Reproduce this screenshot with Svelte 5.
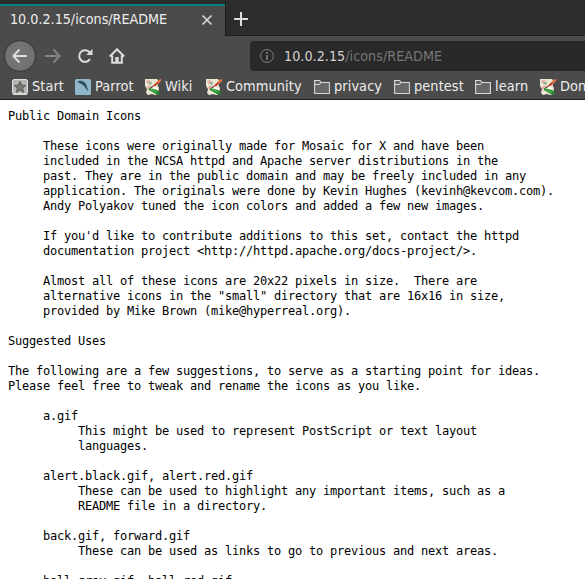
<script>
  const bookmarks = [
    { label: 'Start', icon: 'star', width: 63 },
    { label: 'Parrot', icon: 'parrot', width: 70 },
    { label: 'Wiki', icon: 'wiki', width: 61 },
    { label: 'Community', icon: 'wiki', width: 108 },
    { label: 'privacy', icon: 'folder', width: 80 },
    { label: 'pentest', icon: 'folder', width: 81 },
    { label: 'learn', icon: 'folder', width: 65 },
    { label: 'Donate', icon: 'wiki', width: 80 }
  ];

  const readme = `Public Domain Icons

     These icons were originally made for Mosaic for X and have been
     included in the NCSA httpd and Apache server distributions in the
     past. They are in the public domain and may be freely included in any
     application. The originals were done by Kevin Hughes (kevinh@kevcom.com).
     Andy Polyakov tuned the icon colors and added a few new images.

     If you'd like to contribute additions to this set, contact the httpd
     documentation project <http://httpd.apache.org/docs-project/>.

     Almost all of these icons are 20x22 pixels in size.  There are
     alternative icons in the "small" directory that are 16x16 in size,
     provided by Mike Brown (mike@hyperreal.org).

Suggested Uses

The following are a few suggestions, to serve as a starting point for ideas.
Please feel free to tweak and rename the icons as you like.

     a.gif
          This might be used to represent PostScript or text layout
          languages.

     alert.black.gif, alert.red.gif
          These can be used to highlight any important items, such as a
          README file in a directory.

     back.gif, forward.gif
          These can be used as links to go to previous and next areas.

     ball.gray.gif, ball.red.gif`;
</script>

<div class="browser">
  <header>
    <div class="tabs">
      <div class="tab">
        <span class="title">10.0.2.15/icons/README</span>
        <svg class="close" width="12" height="12" viewBox="0 0 12 12"><path d="M1.5 1.5l9 9M10.5 1.5l-9 9" stroke="#d8d8d8" stroke-width="1.7" /></svg>
      </div>
      <div class="strip">
        <svg width="14" height="14" viewBox="0 0 14 14"><path d="M7 0v14M0 7h14" stroke="#dedede" stroke-width="2" /></svg>
      </div>
    </div>
    <div class="nav">
      <button class="back" aria-label="Back">
        <svg width="16" height="16" viewBox="0 0 16 16"><path d="M15 8H1.5M7.5 1.5L1.3 8l6.2 6.5" /></svg>
      </button>
      <svg class="forward" width="16" height="16" viewBox="0 0 16 16"><path d="M0 8h14.5M8.5 1.5L14.7 8l-6.2 6.5" /></svg>
      <svg class="reload" width="16" height="16" viewBox="0 0 16 16"><path d="M13 11A5.8 5.8 0 1 1 11.8 3.6L13.5 5.2" /><path class="fill" d="M15.5 1v6H9.3z" /></svg>
      <svg class="home" width="16" height="16" viewBox="0 0 16 16"><path d="M.8 8.5L8 1.3l7.2 7.2M3.2 7.5v7.3h9.6V7.5" /><path class="fill" d="M6.3 9h3.4v6H6.3z" /></svg>
      <div class="url">
        <svg width="14" height="14" viewBox="0 0 14 14"><circle cx="7" cy="7" r="6.4" fill="none" stroke="#858585" /><path d="M7 3v1.7M7 6v5" stroke="#858585" stroke-width="1.6" /></svg>
        <span class="address">10.0.2.15<i>/icons/README</i></span>
      </div>
    </div>
    <div class="bookmarks">
      {#each bookmarks as item}
        <div class="bookmark" style:width="{item.width}px">
          {#if item.icon === 'star'}
            <svg width="16" height="16" viewBox="0 0 16 16"><rect x=".5" y=".5" width="15" height="14.5" rx="1.5" fill="#b7b7b5" stroke="#deded9" /><path d="M1 15.3h14" stroke="#efefea" /><path d="M8 2.2l1.7 3.9 4.1.3-3.1 2.8.9 4.1L8 11.2l-3.6 2.1.9-4.1-3.1-2.8 4.1-.3z" fill="#777975" stroke="#555753" stroke-width=".9" /></svg>
          {:else if item.icon === 'parrot'}
            <svg width="16" height="16" viewBox="0 0 16 16"><rect width="16" height="16" rx="1.5" fill="#90b6ca" /><path d="M2.8 2.2C7 .9 10.8 3 11.7 7l1.6 5.6-2.8-3.4C8.8 6.3 7.8 6 5.8 4.8L3 3.5z" fill="#34505c" /></svg>
          {:else if item.icon === 'wiki'}
            <svg width="16" height="16" viewBox="0 0 16 16">
              <path d="M0 0h12l2 3-1.5 3L14 9l-1 6-3 1-3-1-4 1-2-2 1-4-2-3z" fill="#e9e7d1" />
              <path d="M1 2l3-1 2 2-3 2zM2 8l3-2 1 3-3 2z" fill="#e4a9a1" /><path d="M3 4l4-1-1 3z" fill="#7fa790" />
              <path d="M6 8.5L14 1l2 1-8 7z" fill="#bd3518" /><path d="M12 2.5L15 0h1v2l-3 3z" fill="#e87344" /><path d="M5 9.2l2-2 1 1.2z" fill="#242820" />
              <path d="M9 7l4 3-2 1-4-2z" fill="#fffdf0" />
              <path d="M4 9l8 2 3 3-1 1.5-3-.5-7-4z" fill="#18882b" /><path d="M6 10.5l6 2.7" stroke="#69ca5c" />
            </svg>
          {:else}
            <svg width="16" height="16" viewBox="0 0 16 16"><path d="M.6 14.5V1.5h5l1.5 2h8.3v11z" fill="#676767" stroke="#d9d9d6" stroke-width="1.1" /><path d="M.5 5.5h5l1.5-2" fill="none" stroke="#d9d9d6" /></svg>
          {/if}
          <span>{item.label}</span>
        </div>
      {/each}
    </div>
  </header>
  <pre>{readme}</pre>
</div>

<style>
  :global(body) { margin: 0; background: #fff; }
  .browser { width: 585px; height: 579px; overflow: hidden; background: #fff; font-family: "DejaVu Sans Condensed", "DejaVu Sans", sans-serif; font-stretch: condensed; font-size: 14.2px; color: #eee; }
  header { box-sizing: border-box; height: 100px; background: #4b4b4b; border-bottom: 1px solid #202020; }
  .tabs { display: flex; height: 36px; background: #2c2c2c; }
  .tab { box-sizing: border-box; width: 225px; height: 32px; margin-top: 4px; display: flex; align-items: center; padding: 0 12px 4px 10px; justify-content: space-between; border-top: 2px solid #008080; background: #4b4b4b; }
  .title { white-space: nowrap; }
  .close { margin-top: 2px; }
  .strip { box-sizing: border-box; flex: 1; border-left: 1px solid #1d1d1d; border-bottom: 1px solid #1d1d1d; padding: 12px 0 0 8px; }
  svg { display: block; flex: none; }
  .nav { display: flex; height: 40px; align-items: center; padding-left: 4px; }
  .nav > svg, .back svg { fill: none; stroke: #dedede; stroke-width: 2; }
  .nav .fill { fill: #dedede; stroke: none; }
  .back { box-sizing: border-box; flex: none; width: 32px; height: 32px; border-radius: 50%; border: 1px solid #303030; background: #737373; padding: 0; display: flex; align-items: center; justify-content: center; }
  .nav .forward { margin-left: 9px; stroke: #858585; }
  .reload { margin-left: 16px; }
  .home { margin-left: 16px; }
  .url { box-sizing: border-box; margin-left: 125px; flex: 1; height: 30px; border-radius: 4px 0 0 4px; background: #292929; display: flex; align-items: center; padding-left: 10px; }
  .address { margin-left: 10px; color: #d0d0d0; letter-spacing: .04px; }
  .address i { font-style: normal; color: #777; }
  .bookmarks { display: flex; height: 21px; padding-left: 12px; align-items: center; overflow: hidden; font-size: 14.4px; letter-spacing: .08px; }
  .bookmark { display: flex; flex: none; align-items: center; gap: 4px; white-space: nowrap; }
  .bookmark span { line-height: 18px; margin-top: -1px; }
  pre { margin: 9px 0 0 8px; font: 12px/15px "DejaVu Sans Mono", monospace; letter-spacing: -.2246px; color: #000; }
</style>
